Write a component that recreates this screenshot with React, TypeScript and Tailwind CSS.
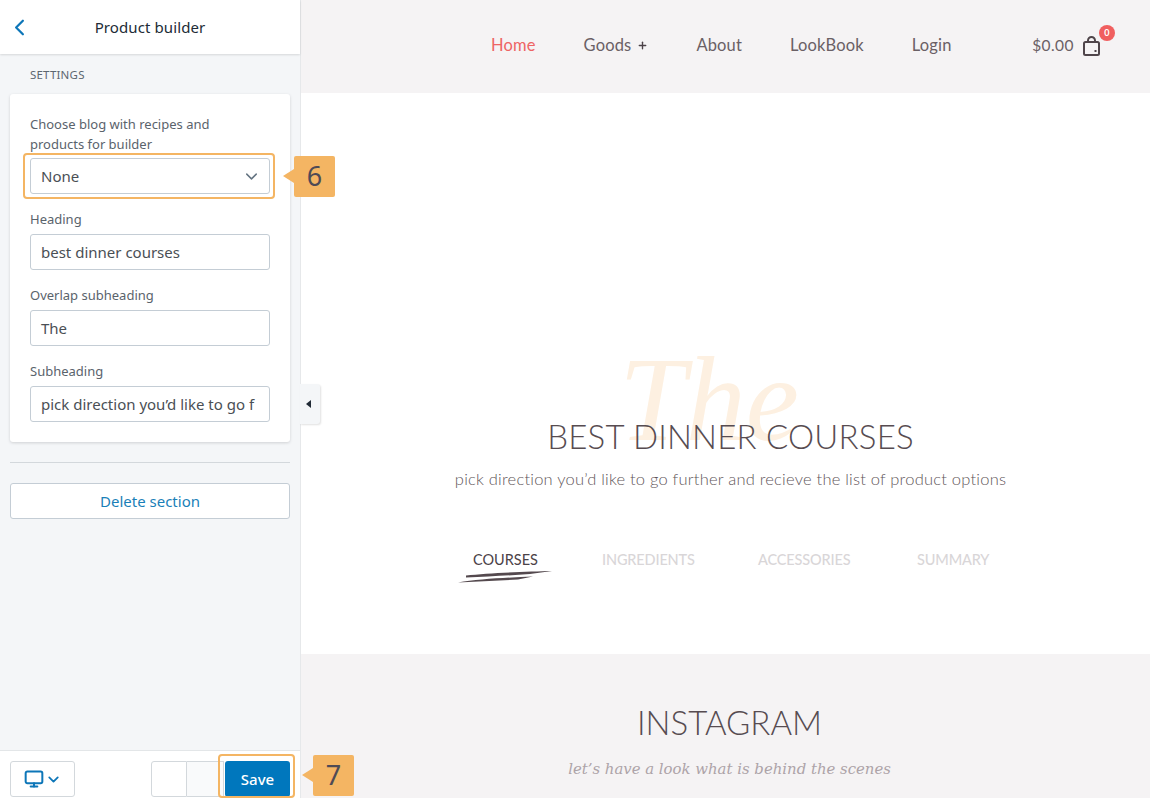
import React from 'react';
import { ChevronDown, ChevronLeft, Monitor, Plus } from 'lucide-react';

const Callout = ({ n, className = '' }: { n: number; className?: string }) => (
  <div className={`absolute w-[41px] h-[41px] bg-[#f4b563] rounded-[2px] flex items-center justify-center text-[27px] text-[#4f4a55] ${className}`}>
    <span className="absolute left-[-11px] top-[13px] w-0 h-0 border-y-[7px] border-y-transparent border-r-[11px] border-r-[#f4b563]" />
    {n}
  </div>
);

const Field = ({ label, value }: { label: string; value: string }) => (
  <div className="mb-[15px] last:mb-[11px]">
    <div className="text-[13px] leading-[20px] text-[#5a636c] mb-[5px]">{label}</div>
    <div className="h-[36px] px-[10px] bg-white border border-[#c4cdd5] rounded-[3px] flex items-center text-[15px] text-[#4a4f55] overflow-hidden whitespace-nowrap">
      {value}
    </div>
  </div>
);

const Sidebar = () => (
  <aside className="relative z-10 w-[301px] shrink-0 h-full bg-[#f4f6f8] border-r border-[#e6e8ea] flex flex-col font-['Noto_Sans',sans-serif]">
    <header className="relative h-[54px] shrink-0 bg-white shadow-[0_1px_2px_rgba(0,0,0,0.12)] flex items-center justify-center">
      <ChevronLeft className="absolute left-[6px] top-[14px] text-[#0d76b8]" size={27} strokeWidth={2} />
      <h1 className="text-[15px] text-[#212b36] tracking-[0.1px]">Product builder</h1>
    </header>
    <div className="flex-1 px-[10px]">
      <div className="pl-[20px] pt-[13px] pb-[11px] text-[11.5px] leading-[16px] tracking-[0.2px] text-[#5c6670]">SETTINGS</div>
      <section className="bg-white rounded-[3px] shadow-[0_1px_3px_rgba(63,63,68,0.2)] px-[20px] pt-[20px] pb-[9px]">
        <div className="max-w-[200px] text-[13px] leading-[20px] text-[#5a636c] mb-[4px]">Choose blog with recipes and products for builder</div>
        <div className="relative mb-[15px]">
          <div className="h-[36px] px-[10px] bg-white border border-[#c4cdd5] rounded-[3px] flex items-center justify-between text-[15px] text-[#4a4f55]">
            None
            <ChevronDown className="text-[#637381] -mr-[2px]" size={19} strokeWidth={1.8} />
          </div>
          <div className="absolute left-[-7px] right-[-5px] top-[-5px] bottom-[-5px] border-2 border-[#f4b563] rounded-[4px]" />
          <Callout n={6} className="left-[264px] top-[-2px]" />
        </div>
        <Field label="Heading" value="best dinner courses" />
        <Field label="Overlap subheading" value="The" />
        <Field label="Subheading" value="pick direction you’d like to go f" />
      </section>
      <hr className="mt-[20px] border-[#d3d8dc]" />
      <button className="mt-[20px] w-full h-[36px] bg-white border border-[#c4cdd5] rounded-[3px] text-[15px] text-[#1a7fb8]">Delete section</button>
    </div>
    <footer className="h-[48px] shrink-0 bg-white border-t border-[#e3e6e8] flex items-start justify-between pl-[10px] pr-[10px] pt-[10px]">
      <button className="w-[65px] h-[36px] border border-[#d3d8dc] rounded-[3px] flex items-center justify-center gap-[1px] text-[#0d76b8]">
        <Monitor size={20} strokeWidth={2.4} />
        <ChevronDown size={17} strokeWidth={2.5} />
      </button>
      <div className="relative flex">
        <div className="w-[36px] h-[36px] bg-white border border-[#d3d8dc] rounded-l-[3px]" />
        <div className="w-[37px] h-[36px] bg-[#f9fafb] border-y border-r border-[#d3d8dc] mr-[1px]" />
        <button className="w-[65px] h-[36px] bg-[#0077bd] rounded-[3px] text-[15px] font-medium text-white">Save</button>
        <div className="absolute left-[67px] right-[-5px] top-[-7px] h-[44px] border-2 border-[#f4b563] rounded-[4px]" />
        <Callout n={7} className="left-[162px] top-[-6px]" />
      </div>
    </footer>
    <div className="absolute left-[300px] top-[384px] w-[20px] h-[40px] bg-[#f4f6f8] rounded-r-[3px] shadow-[1px_1px_2px_rgba(0,0,0,0.12)] flex items-center justify-center pr-[4px]">
      <span className="w-0 h-0 border-y-[4px] border-y-transparent border-r-[5px] border-r-[#212b36]" />
    </div>
  </aside>
);

const navLinks = ['Goods', 'About', 'LookBook', 'Login'];

const Nav = () => (
  <nav className="h-[93px] shrink-0 bg-[#f5f3f4] flex items-center pl-[190px] pr-[49px] pb-[2px] text-[16.5px] tracking-[0.15px] text-[#6a6065]">
    <a className="text-[#ee6464] mr-[48px]">Home</a>
    {navLinks.map((l) => (
      <a key={l} className="mr-[48px] flex items-center gap-[6px]">
        {l}
        {l === 'Goods' && <Plus size={11} strokeWidth={3} className="text-[#4b4247]" />}
      </a>
    ))}
    <div className="ml-auto flex items-center gap-[9px]">
      <span className="text-[15.5px] tracking-[0.45px]">$0.00</span>
      <div className="relative">
        <svg width="18" height="20" viewBox="0 0 18 20" fill="none" stroke="#4f454a" strokeWidth="2" className="block">
          <rect x="1" y="6" width="15" height="13" rx="1.5" />
          <path d="M5 6V4.5a3.5 3.5 0 0 1 7 0V6" />
          <path d="M12.5 14v2" />
        </svg>
        <span className="absolute right-[-14px] top-[-11px] w-[16px] h-[16px] rounded-full bg-[#f05f5f] text-white text-[9px] font-bold flex items-center justify-center">0</span>
      </div>
    </div>
  </nav>
);

const tabs = [
  { label: 'COURSES', w: 'w-[129px]' },
  { label: 'INGREDIENTS', w: 'w-[156px]' },
  { label: 'ACCESSORIES', w: 'w-[159px]' },
  { label: 'SUMMARY', w: 'w-auto' },
];

const Builder = () => (
  <section className="h-[561px] shrink-0 bg-white flex flex-col items-center pt-[322px]">
    <div className="relative w-full flex flex-col items-center pl-[10px]">
      <span className="absolute left-[318px] top-[-80px] text-[120px] leading-[130px] italic text-[#fdf0e1] font-['Liberation_Serif',serif] select-none">The</span>
      <h2 className="relative text-[33px] leading-[42px] font-light text-[#574c51] tracking-[0.2px]">BEST DINNER COURSES</h2>
      <p className="relative mt-[10px] text-[16.5px] leading-[24px] font-light text-[#5f565a] tracking-[0.22px]">pick direction you’d like to go further and recieve the list of product options</p>
    </div>
    <div className="mt-[59px] flex self-start pl-[172px] text-[14.5px] leading-[20px]">
      {tabs.map((t, i) => (
        <div key={t.label} className={`relative ${t.w} ${i === 0 ? 'text-[#4b4247]' : 'text-[#d9d6d8] font-medium tracking-[-0.15px]'}`}>
          {t.label}
          {i === 0 && (
            <svg width="96" height="13" viewBox="0 0 96 13" className="absolute left-[-15px] top-[20px]" fill="#54494e">
              <path d="M8 5.5C30 3 70 1.5 94 1L72 4C50 5.5 30 6.5 8 7.5Z" />
              <path d="M0 12.5C20 9 50 7.5 75 6.5L60 9.5C40 10.5 20 11.5 0 12.5Z" />
            </svg>
          )}
        </div>
      ))}
    </div>
  </section>
);

export default function App() {
  return (
    <div className="relative w-[1150px] h-[798px] overflow-hidden flex bg-white">
      <Sidebar />
      <main className="flex-1 min-w-0 flex flex-col font-['Lato',sans-serif]">
        <Nav />
        <Builder />
        <section className="flex-1 bg-[#f5f3f4] flex flex-col items-center pt-[47px] pl-[8px]">
          <h2 className="text-[33px] leading-[42px] font-light text-[#574c51]">INSTAGRAM</h2>
          <p className="mt-[15px] text-[14.9px] leading-[22px] italic text-[#ada3a8] font-['DejaVu_Serif',serif]">let’s have a look what is behind the scenes</p>
        </section>
      </main>
    </div>
  );
}
